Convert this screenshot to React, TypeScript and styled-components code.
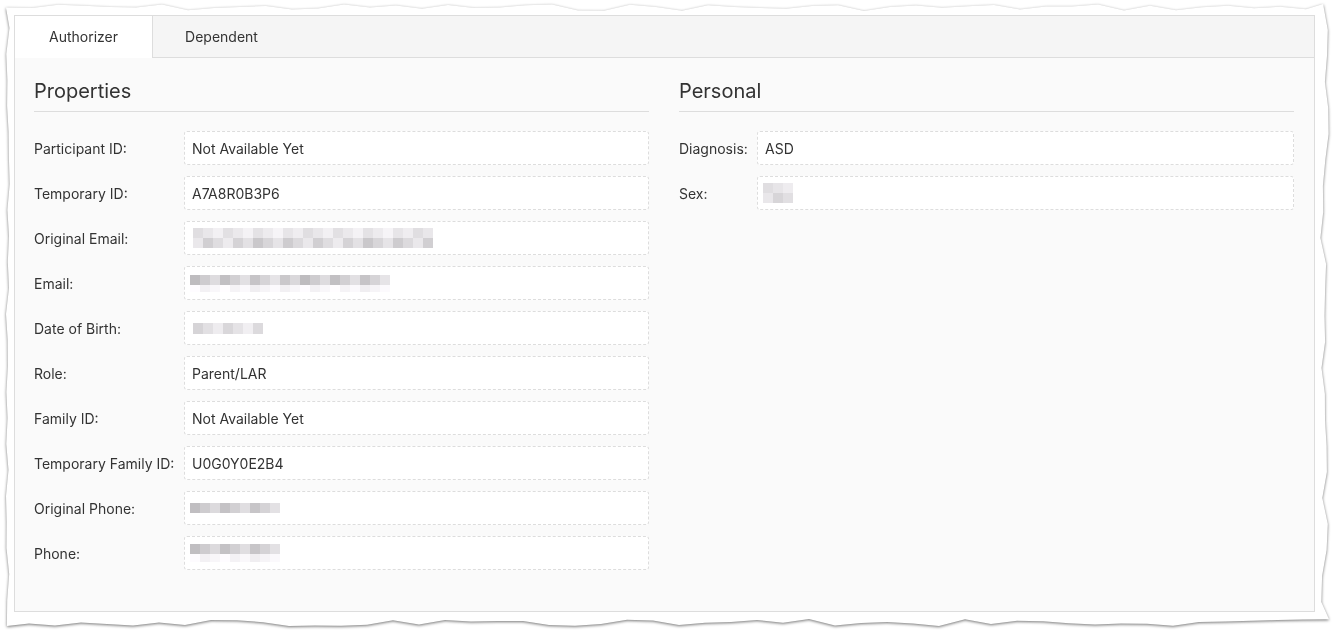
import { createGlobalStyle } from "styled-components";
import styled from "styled-components";

const GlobalStyle = createGlobalStyle`
  html, body {
    margin: 0;
    padding: 0;
    background: #ffffff;
  }
  body {
    font-family: Inter, "Noto Sans", "Liberation Sans", sans-serif;
    color: #333333;
  }
`;

// jagged outline for the torn-paper edge, seeded so it is stable
function tornPolygon(w: number, h: number) {
  let seed = 7;
  const rnd = () => {
    seed = (seed * 9301 + 49297) % 233280;
    return seed / 233280;
  };
  const pts: string[] = [];
  const step = 26;
  for (let x = 0; x <= w; x += step) pts.push(`${x}px ${(rnd() * 7).toFixed(1)}px`);
  for (let y = 0; y <= h; y += step) pts.push(`${(w - rnd() * 9).toFixed(1)}px ${y}px`);
  for (let x = w; x >= 0; x -= step) pts.push(`${x}px ${(h - rnd() * 7).toFixed(1)}px`);
  for (let y = h; y >= 0; y -= step) pts.push(`${(rnd() * 4).toFixed(1)}px ${y}px`);
  return `polygon(${pts.join(", ")})`;
}

const Shadow = styled.div`
  padding: 4px 7px 6px 6px;
  filter: drop-shadow(0 1px 1.5px rgba(0, 0, 0, 0.55));
`;

const Sheet = styled.div`
  width: 1323px;
  height: 622px;
  box-sizing: border-box;
  padding: 11px 14px 14px 8px;
  background: #ffffff;
  clip-path: ${tornPolygon(1323, 622)};
`;

const Panel = styled.div`
  height: 597px;
  box-sizing: border-box;
  border: 1px solid #dddddd;
  background: #fafafa;
  display: flex;
  flex-direction: column;
`;

const TabBar = styled.div`
  display: flex;
  height: 42px;
  background: #f5f5f5;
  border-bottom: 1px solid #dddddd;
  box-sizing: border-box;
`;

const Tab = styled.div<{ $active?: boolean }>`
  width: 138px;
  display: flex;
  align-items: center;
  justify-content: center;
  padding-bottom: 1px;
  font-size: 14px;
  color: #333333;
  background: ${(p) => (p.$active ? "#ffffff" : "transparent")};
  border-right: 1px solid ${(p) => (p.$active ? "#dddddd" : "transparent")};
  margin-bottom: ${(p) => (p.$active ? "-1px" : "0")};
  box-sizing: border-box;
  cursor: pointer;
`;

const Body = styled.div`
  display: grid;
  grid-template-columns: 615px 615px;
  column-gap: 30px;
  padding: 19px 20px 0 19px;
`;

const Column = styled.div`
  display: flex;
  flex-direction: column;
`;

const Heading = styled.h2`
  margin: 0 0 19px;
  padding: 0 0 6px;
  font-size: 20px;
  font-weight: 400;
  line-height: 28px;
  color: #333333;
  border-bottom: 1px solid #dddddd;
`;

const Rows = styled.div`
  display: flex;
  flex-direction: column;
  gap: 11px;
`;

const Row = styled.div<{ $labelWidth: number }>`
  display: grid;
  grid-template-columns: ${(p) => p.$labelWidth}px 1fr;
  align-items: center;
`;

const Label = styled.div`
  font-size: 14px;
  color: #333333;
`;

const Field = styled.div`
  height: 34px;
  box-sizing: border-box;
  border: 1px dashed #dddddd;
  border-radius: 3px;
  background: #ffffff;
  display: flex;
  align-items: center;
  padding-left: 7px;
  font-size: 14px;
  color: #333333;
`;

const Redacted = styled.div<{ $offset: number }>`
  display: flex;
  flex-direction: column;
  margin-left: ${(p) => p.$offset}px;
`;

const PixelRow = styled.div`
  display: flex;
`;

const Pixel = styled.span<{ $h: number }>`
  width: 10px;
  height: ${(p) => p.$h}px;
`;

function shade(i: number, base: number, spread: number) {
  const v = Math.round(base + ((i * 37) % 11) * spread);
  return `rgb(${v + 2}, ${v}, ${v + 3})`;
}

type Blur = { cols: number; rows: { h: number; base: number; spread: number }[]; offset: number };

function Pixelated({ blur }: { blur: Blur }) {
  return (
    <Redacted $offset={blur.offset}>
      {blur.rows.map((r, ri) => (
        <PixelRow key={ri}>
          {Array.from({ length: blur.cols }).map((_, i) => (
            <Pixel
              key={i}
              $h={r.h}
              style={{ background: shade(i + ri * 5, r.base, r.spread) }}
            />
          ))}
        </PixelRow>
      ))}
    </Redacted>
  );
}

type Item = { label: string; value?: string; blur?: Blur };

const properties: Item[] = [
  { label: "Participant ID:", value: "Not Available Yet" },
  { label: "Temporary ID:", value: "A7A8R0B3P6" },
  {
    label: "Original Email:",
    blur: {
      cols: 24,
      offset: 1,
      rows: [
        { h: 10, base: 222, spread: 2.2 },
        { h: 10, base: 200, spread: 3.5 },
      ],
    },
  },
  {
    label: "Email:",
    blur: {
      cols: 20,
      offset: -2,
      rows: [
        { h: 10, base: 188, spread: 4 },
        { h: 7, base: 238, spread: 1.5 },
      ],
    },
  },
  {
    label: "Date of Birth:",
    blur: { cols: 7, offset: 1, rows: [{ h: 11, base: 212, spread: 3 }] },
  },
  { label: "Role:", value: "Parent/LAR" },
  { label: "Family ID:", value: "Not Available Yet" },
  { label: "Temporary Family ID:", value: "U0G0Y0E2B4" },
  {
    label: "Original Phone:",
    blur: { cols: 9, offset: -2, rows: [{ h: 10, base: 190, spread: 3.5 }] },
  },
  {
    label: "Phone:",
    blur: {
      cols: 9,
      offset: -2,
      rows: [
        { h: 10, base: 190, spread: 3.5 },
        { h: 8, base: 238, spread: 1.4 },
      ],
    },
  },
];

const personal: Item[] = [
  { label: "Diagnosis:", value: "ASD" },
  {
    label: "Sex:",
    blur: {
      cols: 3,
      offset: -2,
      rows: [
        { h: 10, base: 222, spread: 1.8 },
        { h: 10, base: 208, spread: 2.5 },
      ],
    },
  },
];

function Section({ title, items, labelWidth }: { title: string; items: Item[]; labelWidth: number }) {
  return (
    <Column>
      <Heading>{title}</Heading>
      <Rows>
        {items.map((it) => (
          <Row key={it.label} $labelWidth={labelWidth}>
            <Label>{it.label}</Label>
            <Field>{it.blur ? <Pixelated blur={it.blur} /> : it.value}</Field>
          </Row>
        ))}
      </Rows>
    </Column>
  );
}

function App() {
  return (
    <>
      <GlobalStyle />
      <Shadow>
        <Sheet>
          <Panel>
            <TabBar>
              <Tab $active>Authorizer</Tab>
              <Tab>Dependent</Tab>
            </TabBar>
            <Body>
              <Section title="Properties" items={properties} labelWidth={150} />
              <Section title="Personal" items={personal} labelWidth={78} />
            </Body>
          </Panel>
        </Sheet>
      </Shadow>
    </>
  );
}

export default App;
